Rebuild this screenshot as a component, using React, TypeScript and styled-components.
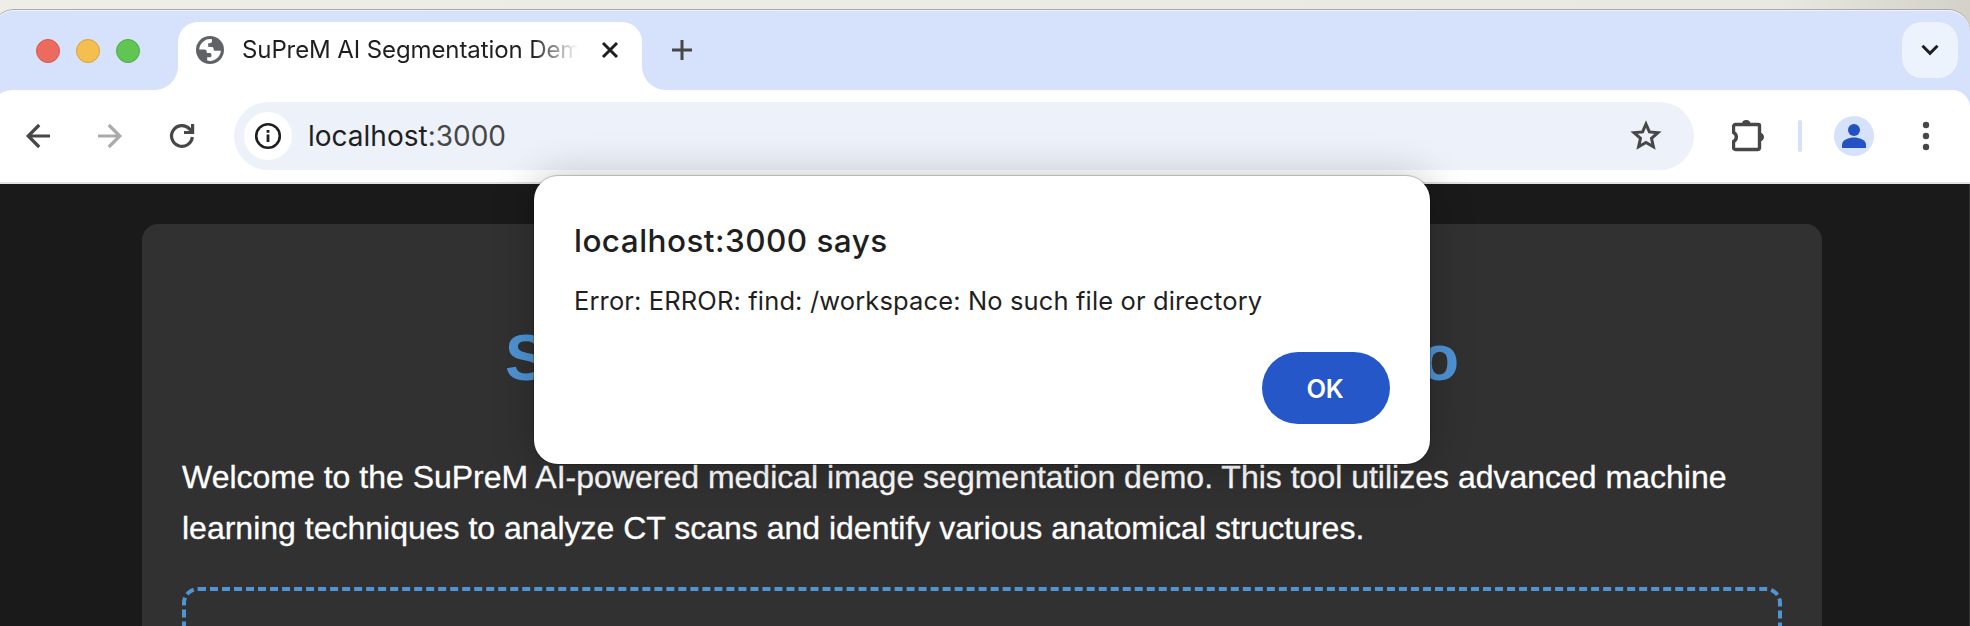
import React from "react";
import styled, { createGlobalStyle, css } from "styled-components";

const GlobalStyle = createGlobalStyle`
  * { box-sizing: border-box; }
  body {
    margin: 0;
    overflow: hidden;
    background: #ecebe5;
    font-family: Inter, "Liberation Sans", sans-serif;
  }
`;

const Desktop = styled.div`
  height: 626px;
  padding-top: 10px;
  overflow: hidden;
  background: linear-gradient(90deg, #efede7, #e9e8e2 90%, #d3d1c8);
`;

const BrowserWindow = styled.div`
  display: flex;
  flex-direction: column;
  height: 700px;
  margin-left: -8px;
  border-radius: 22px 22px 0 0;
  background: #d6e1fc;
  box-shadow: 0 -1px 0 #aaa8a0, inset 0 1px 0 #eef2fd;
`;

const TabStrip = styled.div`
  display: flex;
  flex-shrink: 0;
  align-items: flex-start;
  height: 80px;
  padding: 12px 12px 0 44px;
`;

const TrafficLights = styled.div`
  display: flex;
  gap: 16px;
  padding-top: 17px;
`;

const Light = styled.span<{ $fill: string; $ring: string }>`
  width: 24px;
  height: 24px;
  border: 1px solid ${(p) => p.$ring};
  border-radius: 50%;
  background: ${(p) => p.$fill};
`;

const flare = css`
  content: "";
  position: absolute;
  bottom: 0;
  width: 24px;
  height: 24px;
`;

const Tab = styled.div`
  position: relative;
  display: flex;
  align-items: center;
  width: 464px;
  height: 68px;
  margin-left: 38px;
  padding: 0 23px 12px 18px;
  border-radius: 20px 20px 0 0;
  background: #fff;
  &::before {
    ${flare}
    left: -24px;
    background: radial-gradient(circle at 0 0, transparent 23.5px, #fff 24.5px);
  }
  &::after {
    ${flare}
    right: -24px;
    background: radial-gradient(circle at 100% 0, transparent 23.5px, #fff 24.5px);
  }
`;

const TabTitle = styled.div`
  flex: 1;
  margin: 0 23px 0 18px;
  overflow: hidden;
  color: #1f1f1f;
  font-size: 24px;
  line-height: 32px;
  letter-spacing: -0.1px;
  white-space: nowrap;
  mask-image: linear-gradient(90deg, #000 calc(100% - 46px), transparent 100%);
`;

const NewTab = styled.div`
  display: flex;
  margin: 18px 0 0 30px;
`;

const TabSearch = styled.div`
  display: flex;
  align-items: center;
  justify-content: center;
  width: 56px;
  height: 56px;
  margin-left: auto;
  border-radius: 20px;
  background: #ecf3fd;
`;

const Toolbar = styled.div`
  display: flex;
  flex-shrink: 0;
  align-items: center;
  height: 94px;
  padding: 0 30px 0 32px;
  border-bottom: 2px solid #dfe1e4;
  border-radius: 20px 18px 0 0;
  background: #fff;
`;

const NavButtons = styled.div`
  display: flex;
  gap: 44px;
`;

const Omnibox = styled.div`
  display: flex;
  align-items: center;
  width: 1460px;
  height: 68px;
  margin-left: 38px;
  padding: 0 33px 0 10px;
  border-radius: 34px;
  background: #edf2fa;
`;

const SiteInfo = styled.div`
  display: flex;
  align-items: center;
  justify-content: center;
  width: 48px;
  height: 48px;
  border-radius: 50%;
  background: #fff;
`;

const Url = styled.div`
  flex: 1;
  margin-left: 16px;
  color: #1f1f1f;
  font-size: 28px;
  line-height: 36px;
`;

const Port = styled.span`
  color: #474747;
`;

const Actions = styled.div`
  display: flex;
  align-items: center;
  flex: 1;
  margin-left: 38px;
`;

const Divider = styled.span`
  width: 4px;
  height: 32px;
  margin: 0 32px 0 34px;
  border-radius: 2px;
  background: #d6e2fb;
`;

const Avatar = styled.div`
  display: flex;
  width: 40px;
  height: 40px;
  margin-right: 48px;
  border-radius: 50%;
  overflow: hidden;
  background: #d6e2fb;
`;

const Page = styled.main`
  flex: 1;
  margin-left: 8px;
  padding: 40px 147px 0 142px;
  border-right: 1px solid #333;
  background: #1a1a1a;
  font-family: "Liberation Sans", Arial, sans-serif;
`;

const Card = styled.section`
  height: 600px;
  padding: 40px;
  border-radius: 16px;
  background: #313131;
`;

const Heading = styled.h1`
  margin: 43px 0;
  color: #4f94d4;
  font-size: 64px;
  line-height: 102px;
  text-align: center;
`;

const Intro = styled.p`
  margin: 0 0 32.6px;
  color: #fff;
  font-size: 32px;
  line-height: 51.2px;
  -webkit-text-stroke: 0.3px #fff;
`;

const DropZone = styled.div`
  height: 300px;
  border: 4px dashed #4f94d4;
  border-radius: 16px;
`;

const Dialog = styled.div`
  position: absolute;
  top: 176px;
  left: 534px;
  display: flex;
  flex-direction: column;
  width: 896px;
  height: 288px;
  padding: 45px 40px 40px;
  border-radius: 24px;
  background: #fff;
  box-shadow: 0 0 1px 1px rgba(0, 0, 0, 0.22), 0 2px 44px rgba(0, 0, 0, 0.24);
`;

const DialogTitle = styled.h2`
  margin: 0;
  color: #1f1f1f;
  font-size: 31.5px;
  font-weight: 550;
  line-height: 40px;
  letter-spacing: 0.45px;
`;

const DialogMessage = styled.p`
  margin: 24px 0 0;
  color: #1f1f1f;
  font-size: 25.5px;
  line-height: 32px;
  letter-spacing: 0.13px;
`;

const OkButton = styled.button`
  align-self: flex-end;
  width: 128px;
  height: 72px;
  margin-top: auto;
  padding: 1px 2px 0 0;
  border: 0;
  border-radius: 36px;
  background: #2657c9;
  color: #fff;
  font-family: inherit;
  font-size: 25.5px;
  font-weight: 600;
  letter-spacing: -0.2px;
`;

const GlobeIcon = () => (
  <svg width="28" height="28" viewBox="0 0 28 28">
    <circle cx="14" cy="14" r="14" fill="#5f6368" />
    <path
      fill="#fff"
      d="M3.200 13.400A10.900 10.900 0 0 1 16 3.300V5a2.200 2.200 0 0 1-2.200 2.200h-1.600v2.600c0 .6-.4 1-1 1H9.400c2 0 5.600.2 6.600.2 1.400 0 1.600 1 1.600 2.200 0 1 .6 1.600 1.600 1.600h5.700A10.900 10.900 0 0 1 11.200 24.500V21.300h2.600c1 0 1.600-.6 1.600-1.600V18.500c0-.9-.6-1.500-1.500-1.500h-1.600c-1.200 0-1.700-.6-1.700-1.600 0-1.200-.7-2-2-2Z"
    />
  </svg>
);

const CloseIcon = () => (
  <svg width="18" height="18" viewBox="0 0 18 18" stroke="#1f1f1f" strokeWidth="3">
    <path d="M2 2l14 14M16 2L2 16" />
  </svg>
);

const PlusIcon = () => (
  <svg width="20" height="20" viewBox="0 0 20 20" stroke="#474747" strokeWidth="3">
    <path d="M0 10h20M10 0v20" />
  </svg>
);

const ChevronIcon = () => (
  <svg width="20" height="20" viewBox="0 0 20 20" fill="none" stroke="#1f1f1f" strokeWidth="3">
    <path d="M2.500 5.800L10 13.300L17.500 5.800" />
  </svg>
);

const BackIcon = () => (
  <svg width="28" height="28" viewBox="0 0 28 28" fill="none" stroke="#474747" strokeWidth="3.200">
    <path d="M26 14H4M15.200 3L4.200 14L15.200 25" />
  </svg>
);

const ForwardIcon = () => (
  <svg width="28" height="28" viewBox="0 0 28 28" fill="none" stroke="#ababab" strokeWidth="3.200">
    <path d="M2 14H24M12.800 3L23.800 14L12.800 25" />
  </svg>
);

const ReloadIcon = () => (
  <svg width="28" height="28" viewBox="0 0 28 28" fill="none" stroke="#474747" strokeWidth="3.200">
    <path d="M24.300 15A10.400 10.400 0 1 1 21.500 6.800L24 9.500" />
    <path d="M24.600 2v8.500H16" />
  </svg>
);

const InfoIcon = () => (
  <svg width="28" height="28" viewBox="0 0 28 28" fill="none" stroke="#1f1f1f">
    <circle cx="14" cy="14" r="11.800" strokeWidth="2.600" />
    <path d="M14 12.500v7.500M14 8v2.800" strokeWidth="2.800" />
  </svg>
);

const StarIcon = () => (
  <svg width="30" height="30" viewBox="-1 -1 30 30" overflow="visible">
    <path
      fill="none"
      stroke="#474747"
      strokeWidth="3"
      d="M14 2L17.400 9.900L26 10.700L19.500 16.400L21.400 24.800L14 20.400L6.600 24.800L8.500 16.400L2 10.700L10.600 9.900Z"
    />
  </svg>
);

const PuzzleIcon = () => (
  <svg width="32" height="32" viewBox="0 1 32 32">
    <path
      d="M3.500 5.500h23a1 1 0 0 1 1 1v22a2 2 0 0 1-2 2h-22a2 2 0 0 1-2-2v-6a5 5 0 0 0 0-9v-6a2 2 0 0 1 2-2Z"
      fill="none"
      stroke="#474747"
      strokeWidth="3.400"
      strokeLinejoin="round"
    />
    <path d="M10 5a4.200 4 0 0 1 8.400 0ZM28 13.700a4 4.300 0 0 1 0 8.600Z" fill="#474747" />
  </svg>
);

const PersonIcon = () => (
  <svg width="40" height="40" viewBox="0 0 40 40" fill="#2351c4">
    <circle cx="20" cy="14" r="6" />
    <path d="M8 32v-3.500C8 24 15 21.500 20 21.500S32 24 32 28.500V32Z" />
  </svg>
);

const MenuDotsIcon = () => (
  <svg width="8" height="32" viewBox="0 0 8 32" fill="#474747">
    <circle cx="4" cy="5" r="3.200" />
    <circle cx="4" cy="16" r="3.200" />
    <circle cx="4" cy="27" r="3.200" />
  </svg>
);

export default function App() {
  return (
    <Desktop>
      <GlobalStyle />
      <BrowserWindow>
        <TabStrip>
          <TrafficLights>
            <Light $fill="#ec6a5e" $ring="#d3584d" />
            <Light $fill="#f4bf4f" $ring="#d8a240" />
            <Light $fill="#61c554" $ring="#50a946" />
          </TrafficLights>
          <Tab>
            <GlobeIcon />
            <TabTitle>SuPreM AI Segmentation Demo</TabTitle>
            <CloseIcon />
          </Tab>
          <NewTab>
            <PlusIcon />
          </NewTab>
          <TabSearch>
            <ChevronIcon />
          </TabSearch>
        </TabStrip>
        <Toolbar>
          <NavButtons>
            <BackIcon />
            <ForwardIcon />
            <ReloadIcon />
          </NavButtons>
          <Omnibox>
            <SiteInfo>
              <InfoIcon />
            </SiteInfo>
            <Url>
              localhost<Port>:3000</Port>
            </Url>
            <StarIcon />
          </Omnibox>
          <Actions>
            <PuzzleIcon />
            <Divider />
            <Avatar>
              <PersonIcon />
            </Avatar>
            <MenuDotsIcon />
          </Actions>
        </Toolbar>
        <Page>
          <Card>
            <Heading>SuPreM AI Segmentation Demo</Heading>
            <Intro>
              Welcome to the SuPreM AI-powered medical image segmentation demo. This tool utilizes
              advanced machine learning techniques to analyze CT scans and identify various
              anatomical structures.
            </Intro>
            <DropZone />
          </Card>
        </Page>
      </BrowserWindow>
      <Dialog role="alertdialog">
        <DialogTitle>localhost:3000 says</DialogTitle>
        <DialogMessage>Error: ERROR: find: /workspace: No such file or directory</DialogMessage>
        <OkButton>OK</OkButton>
      </Dialog>
    </Desktop>
  );
}
